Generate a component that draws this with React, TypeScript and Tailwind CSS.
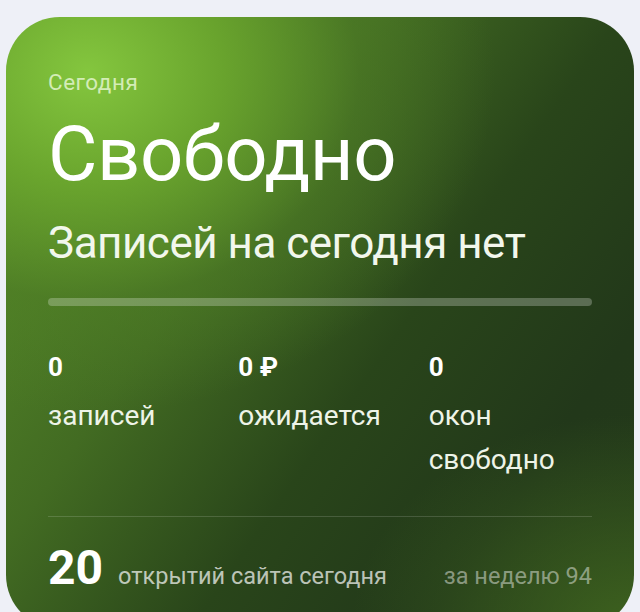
import React from "react";

export default function App() {
  return (
    <div className="min-h-[612px] w-[640px] bg-[#eef0f7] pt-[17px] px-[6px]" style={{ fontFamily: "Roboto, 'Noto Sans', sans-serif" }}>
      <div
        className="relative h-[612px] w-[628px] overflow-hidden rounded-[54px] px-[42px] pt-[51px] text-white"
        style={{
          background:
            "radial-gradient(ellipse 72% 62% at 13% 9%, rgba(132,198,62,1) 0%, rgba(108,168,46,0.9) 30%, rgba(80,128,38,0.5) 60%, rgba(70,110,34,0) 90%), radial-gradient(ellipse 45% 35% at 100% 100%, rgba(64,102,31,0.9) 0%, rgba(64,102,31,0) 100%), linear-gradient(125deg, #5c932a 0%, #426b22 35%, #29451a 58%, #22381a 80%, #23391a 100%)",
        }}
      >
        <div className="text-[22.5px] leading-[28px] tracking-[0.5px] text-[#d3ecb6]">Сегодня</div>
        <div className="mt-[18px] text-[76px] leading-[80px] font-normal tracking-[-0.5px]">Свободно</div>
        <div className="mt-[24px] text-[44px] leading-[50px] tracking-[-0.5px] text-[#f2f7ec]">Записей на сегодня нет</div>
        <div className="mt-[30px] h-[8px] w-full rounded-full bg-white/25" />
        <div className="mt-[46px] grid grid-cols-3 gap-x-[27px]">
          <div>
            <div className="text-[26px] font-bold leading-[31px]">0</div>
            <div className="mt-[11px] text-[28px] leading-[44px] text-[#eef4e8]">записей</div>
          </div>
          <div>
            <div className="text-[26px] font-bold leading-[31px]">0 ₽</div>
            <div className="mt-[11px] text-[28px] leading-[44px] text-[#eef4e8]">ожидается</div>
          </div>
          <div>
            <div className="text-[26px] font-bold leading-[31px]">0</div>
            <div className="mt-[11px] text-[28px] leading-[44px] text-[#eef4e8]">окон свободно</div>
          </div>
        </div>
        <div className="mt-[34px] h-px w-full bg-white/15" />
        <div className="mt-[23px] flex items-baseline">
          <span className="text-[48px] font-bold leading-[56px]">20</span>
          <span className="ml-[15px] text-[23.5px] text-white/70">открытий сайта сегодня</span>
          <span className="ml-auto text-[23.5px] text-white/45">за неделю 94</span>
        </div>
      </div>
    </div>
  );
}
